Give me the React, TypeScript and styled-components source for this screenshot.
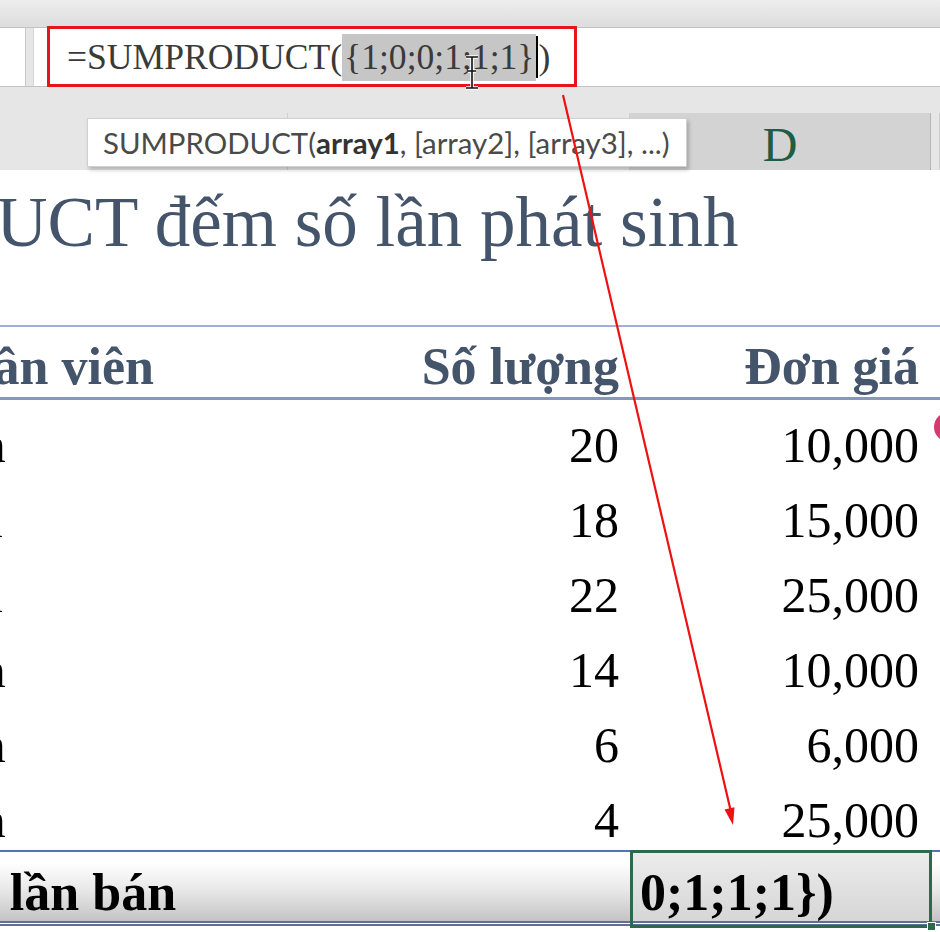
import styled, { createGlobalStyle } from "styled-components";

const GlobalStyle = createGlobalStyle`
  html, body {
    margin: 0;
    padding: 0;
  }
  body {
    width: 940px;
    height: 932px;
    overflow: hidden;
    background: #ffffff;
    font-family: "Liberation Serif", "Times New Roman", serif;
  }
`;

const Screen = styled.div`
  position: relative;
  width: 940px;
  height: 932px;
  overflow: hidden;
  display: flex;
  flex-direction: column;
  background: #e6e6e6;
`;

const TopStrip = styled.div`
  flex: none;
  height: 27px;
  background: linear-gradient(#ededed, #dddddd);
`;

const FormulaRow = styled.div`
  flex: none;
  height: 60px;
  box-sizing: border-box;
  display: flex;
  gap: 7px;
  border-top: 1px solid #c2c2c2;
  border-bottom: 1px solid #c2c2c2;
  background: #e6e6e6;
`;

const NameBox = styled.div`
  width: 25px;
  background: #ffffff;
  border-right: 1px solid #c8c8c8;
`;

const FormulaInput = styled.div`
  flex: 1;
  display: flex;
  align-items: center;
  padding-left: 33px;
  background: #ffffff;
  border-left: 1px solid #d6d6d6;
`;

const FormulaText = styled.div`
  display: flex;
  align-items: center;
  white-space: pre;
  font-size: 35.6px;
  color: #3a3a3a;
`;

const Selected = styled.span`
  display: inline-block;
  height: 47px;
  line-height: 47px;
  padding: 0 2px;
  background: #c6c6c6;
`;

const Caret = styled.span`
  display: inline-block;
  width: 2px;
  height: 42px;
  background: #000000;
`;

const Band = styled.div`
  flex: none;
  height: 26px;
`;

const ColumnHeaders = styled.div`
  flex: none;
  height: 57px;
  display: grid;
  grid-template-columns: 448px 342px 301px 1fr;
  margin-left: -160px;
`;

const ColumnHeader = styled.div<{ $active?: boolean }>`
  box-sizing: border-box;
  display: flex;
  align-items: center;
  justify-content: center;
  border-right: 1px solid ${(p) => (p.$active ? "#b4b4b4" : "#cfcfcf")};
  border-bottom: ${(p) => (p.$active ? "4px solid #217346" : "1px solid #d4d4d4")};
  background: ${(p) => (p.$active ? "#d3d3d3" : "#e6e6e6")};
  color: #1e5d43;
  font-size: 48px;
  padding-top: 4px;
`;

const Sheet = styled.div`
  flex: 1;
  overflow: hidden;
  background: #ffffff;
`;

const Title = styled.div`
  height: 155px;
  box-sizing: border-box;
  padding-top: 12px;
  margin-left: -347px;
  white-space: nowrap;
  font-size: 71px;
  color: #44546a;
`;

const Table = styled.div`
  margin-left: -160px;
  display: flex;
  flex-direction: column;
`;

type RowKind = "head" | "body" | "total";

const Row = styled.div<{ $kind: RowKind }>`
  display: grid;
  grid-template-columns: 448px 342px 300px;
  box-sizing: border-box;
  height: ${(p) => (p.$kind === "total" ? 76 : 75)}px;
  font-size: ${(p) => (p.$kind === "body" ? 50 : 52)}px;
  line-height: 50px;
  font-weight: ${(p) => (p.$kind === "body" ? 400 : 700)};
  color: ${(p) => (p.$kind === "head" ? "#44546a" : "#000000")};
  border-top: ${(p) =>
    p.$kind === "head" ? "2px solid #9fb0d6" : p.$kind === "total" ? "2px solid #5573b0" : "0"};
  border-bottom: ${(p) =>
    p.$kind === "head" ? "3px solid #8799b6" : p.$kind === "total" ? "5px double #5d7096" : "0"};
  background: ${(p) =>
    p.$kind === "total" ? "linear-gradient(#ffffff 15%, #e8e8e8 55%, #c4c4c4 100%)" : "transparent"};
`;

const Cell = styled.div<{ $right?: boolean; $pad?: number; $indent?: number }>`
  display: flex;
  align-items: flex-end;
  justify-content: ${(p) => (p.$right ? "flex-end" : "flex-start")};
  padding: 0 11px ${(p) => p.$pad ?? 5}px 6px;
  text-indent: ${(p) => p.$indent ?? 0}px;
  white-space: nowrap;
`;

const ActiveCell = styled(Cell)`
  position: relative;
  padding-left: 10px;
  background: linear-gradient(#ececec, #d6d6d6);

  &::after {
    content: "";
    position: absolute;
    inset: -2px -2px -7px 0;
    border: 3px solid #2b6a4b;
  }

  &::before {
    content: "";
    position: absolute;
    right: -6px;
    bottom: -10px;
    width: 7px;
    height: 7px;
    background: #2b6a4b;
    border: 1px solid #ffffff;
    z-index: 1;
  }
`;

const Tooltip = styled.div`
  position: absolute;
  left: 87px;
  top: 118px;
  width: 600px;
  height: 49px;
  box-sizing: border-box;
  display: flex;
  align-items: center;
  padding-left: 15px;
  background: #ffffff;
  border: 1px solid #d0d0d0;
  box-shadow: 2px 3px 4px rgba(0, 0, 0, 0.22);
  font-family: Lato, "Open Sans", sans-serif;
  font-size: 29.4px;
  color: #4a4a4a;
  white-space: pre;

  b {
    color: #333333;
  }
`;

const RedFrame = styled.div`
  position: absolute;
  left: 47px;
  top: 26px;
  width: 530px;
  height: 61px;
  box-sizing: border-box;
  border: 3px solid #e8141b;
`;

const PinkDot = styled.div`
  position: absolute;
  left: 934px;
  top: 412px;
  width: 30px;
  height: 30px;
  border-radius: 50%;
  background: #d43a6f;
`;

const Overlay = styled.svg`
  position: absolute;
  inset: 0;
  pointer-events: none;
`;

const rows = [
  { name: "Mỹ Lan", qty: "20", price: "10,000" },
  { name: "Mỹ Nhi", qty: "18", price: "15,000" },
  { name: "Mỹ Nhi", qty: "22", price: "25,000" },
  { name: "Mỹ Lan", qty: "14", price: "10,000" },
  { name: "Mỹ Lan", qty: "6", price: "6,000" },
  { name: "Mỹ Lan", qty: "4", price: "25,000" },
];

export default function App() {
  return (
    <Screen>
      <GlobalStyle />
      <TopStrip />
      <FormulaRow>
        <NameBox />
        <FormulaInput>
          <FormulaText>
            =SUMPRODUCT(<Selected>{"{1;0;0;1;1;1}"}</Selected>
            <Caret />)
          </FormulaText>
        </FormulaInput>
      </FormulaRow>
      <Band />
      <ColumnHeaders>
        <ColumnHeader />
        <ColumnHeader />
        <ColumnHeader $active>D</ColumnHeader>
        <ColumnHeader />
      </ColumnHeaders>
      <Sheet>
        <Title>SUMPRODUCT đếm số lần phát sinh</Title>
        <Table>
          <Row $kind="head">
            <Cell $indent={-10}>Tên nhân viên</Cell>
            <Cell $right>Số lượng</Cell>
            <Cell $right>Đơn giá</Cell>
          </Row>
          {rows.map((r, i) => (
            <Row $kind="body" key={i}>
              <Cell>{r.name}</Cell>
              <Cell $right>{r.qty}</Cell>
              <Cell $right>{r.price}</Cell>
            </Row>
          ))}
          <Row $kind="total">
            <Cell $pad={3} $indent={-24}>Tổng số lần bán</Cell>
            <Cell />
            <ActiveCell $pad={3}>{"0;1;1;1})"}</ActiveCell>
          </Row>
        </Table>
      </Sheet>

      <Tooltip>
        SUMPRODUCT(<b>array1</b>, [array2], [array3], ...)
      </Tooltip>
      <RedFrame />
      <PinkDot />
      <Overlay width="940" height="932" viewBox="0 0 940 932">
        <line x1="563" y1="95" x2="731" y2="812" stroke="#ee1111" strokeWidth="2.2" />
        <polygon points="733,825 724.5,809.5 734.5,807.3" fill="#ee1111" />
        <g stroke="#ffffff" strokeWidth="3.5" fill="none">
          <path d="M472 57 V88 M466 57 H478 M466 88 H478 M468 71 H476" />
        </g>
        <g stroke="#111111" strokeWidth="1.6" fill="none">
          <path d="M472 57 V88 M466 57 H478 M466 88 H478 M468 71 H476" />
        </g>
      </Overlay>
    </Screen>
  );
}
